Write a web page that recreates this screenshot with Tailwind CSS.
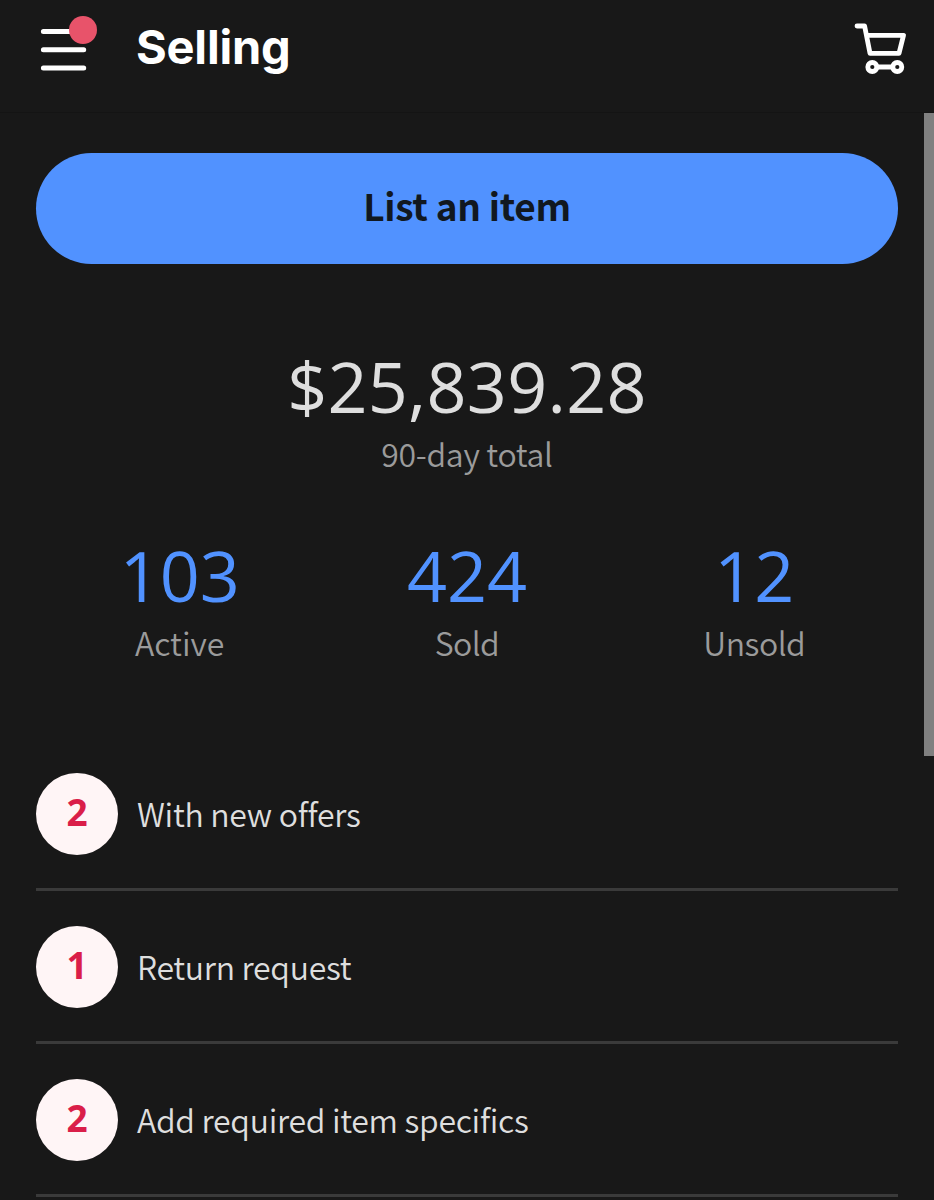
<!DOCTYPE html>
<html lang="en">
  <head>
    <meta charset="utf-8" />
    <title>Selling</title>
    <script src="https://cdn.jsdelivr.net/npm/@tailwindcss/browser@4"></script>
  </head>
  <body class="bg-[#181818]">
    <main class="relative h-[1200px] w-[934px] overflow-hidden bg-[#181818] font-['Noto_Sans_CJK_SC','Open_Sans',sans-serif] text-[#dedede]">
      <!-- Header -->
      <header class="flex h-[113px] items-start justify-between border-b border-[#141414] pr-[27px] pl-[40px]">
        <div class="flex">
          <svg class="mt-4 h-[60px] w-[58px]" viewBox="0 0 58 60" fill="none">
            <path d="M3.4 15.5H43.7M3.4 33.7H43.7M3.4 52H43.7" stroke="#fff" stroke-width="5" stroke-linecap="round" />
            <circle cx="43" cy="14" r="14" fill="#e8536a" />
          </svg>
          <h1 class="mt-[17px] ml-[38px] font-['Inter',sans-serif] text-[47px] leading-[60px] font-bold tracking-[-0.2px] text-white">Selling</h1>
        </div>
        <svg class="mt-[23px] h-[52px] w-[53px]" viewBox="0 0 53 52" fill="none" stroke="#fff" stroke-width="4.8" stroke-linecap="round" stroke-linejoin="round">
          <path d="M3 3H10.6L16 30.3H45L49.5 12.3H13" />
          <circle cx="18.3" cy="44" r="4.5" />
          <circle cx="43.3" cy="44" r="4.5" />
          <path d="M24 44H38" />
        </svg>
      </header>

      <!-- Summary -->
      <section class="px-9 pt-10">
        <button class="block h-[111px] w-full rounded-full bg-[#5192ff] pb-2 text-[37px] leading-[56px] font-bold tracking-[-0.3px] text-[#111820]">List an item</button>
        <div class="mt-[82px] text-center">
          <div class="font-['Open_Sans',sans-serif] text-[70px] leading-[80px] font-normal tracking-[0.3px]">$25,839.28</div>
          <div class="mt-[7px] text-[32px] leading-[40px] font-[350] tracking-[-0.3px] text-[#9b9b9b]">90-day total</div>
        </div>
        <div class="mt-[62px] grid grid-cols-3 text-center">
          <div>
            <div class="font-['Open_Sans',sans-serif] text-[70px] leading-[80px] font-normal text-[#5192ff]">103</div>
            <div class="mt-[7px] text-[32px] leading-[40px] font-[350] text-[#9b9b9b]">Active</div>
          </div>
          <div>
            <div class="font-['Open_Sans',sans-serif] text-[70px] leading-[80px] font-normal text-[#5192ff]">424</div>
            <div class="mt-[7px] text-[32px] leading-[40px] font-[350] tracking-[-0.6px] text-[#9b9b9b]">Sold</div>
          </div>
          <div>
            <div class="font-['Open_Sans',sans-serif] text-[70px] leading-[80px] font-normal text-[#5192ff]">12</div>
            <div class="mt-[7px] text-[32px] leading-[40px] font-[350] tracking-[-0.5px] text-[#9b9b9b]">Unsold</div>
          </div>
        </div>
      </section>

      <!-- To do list -->
      <ul class="mx-9 mt-[76px]">
        <li class="flex h-[153px] items-center border-b-[3px] border-[#3a3a3a] pt-px">
          <span class="flex size-[82px] items-center justify-center rounded-full bg-[#fff5f6] pb-1 font-['Open_Sans',sans-serif] text-[37px] leading-[50px] font-bold text-[#da1e49]">2</span>
          <span class="ml-[19px] pb-px text-[32px] leading-[40px] font-[350] tracking-[-0.3px]">With new offers</span>
        </li>
        <li class="flex h-[153px] items-center border-b-[3px] border-[#3a3a3a] pt-px">
          <span class="flex size-[82px] items-center justify-center rounded-full bg-[#fff5f6] pb-1 font-['Open_Sans',sans-serif] text-[37px] leading-[50px] font-bold text-[#da1e49]">1</span>
          <span class="ml-[19px] pb-px text-[32px] leading-[40px] font-[350] tracking-[-0.3px]">Return request</span>
        </li>
        <li class="flex h-[153px] items-center border-b-[3px] border-[#3a3a3a] pt-px">
          <span class="flex size-[82px] items-center justify-center rounded-full bg-[#fff5f6] pb-1 font-['Open_Sans',sans-serif] text-[37px] leading-[50px] font-bold text-[#da1e49]">2</span>
          <span class="ml-[19px] pb-px text-[32px] leading-[40px] font-[350] tracking-[-0.3px]">Add required item specifics</span>
        </li>
      </ul>

      <!-- Scrollbar -->
      <div class="absolute top-[113px] right-0 h-[643px] w-[10px] bg-[#808080]"></div>
    </main>
  </body>
</html>
